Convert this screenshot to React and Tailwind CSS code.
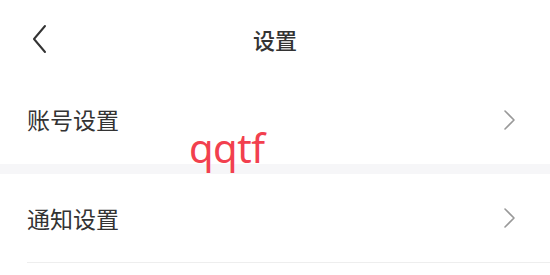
const font = { fontFamily: '"Noto Sans CJK SC", "Noto Sans", sans-serif' }

const Arrow = () => (
  <svg width="14" height="22" viewBox="0 0 14 22" className="mr-[33px]" fill="none">
    <path d="M2 2 L11 11 L2 20" stroke="#999999" strokeWidth="1.6" strokeLinecap="round" strokeLinejoin="round" />
  </svg>
)

export default function App() {
  return (
    <div className="relative w-[550px] h-[275px] bg-white overflow-hidden" style={font}>
      {/* Header */}
      <div className="h-[77px] flex items-center relative">
        <svg width="16" height="30" viewBox="0 0 16 30" className="ml-[31px]" fill="none">
          <path d="M14 2 L3 15 L14 28" stroke="#333333" strokeWidth="2" strokeLinecap="round" strokeLinejoin="round" />
        </svg>
        <h1 className="absolute left-0 right-0 text-center text-[22px] font-medium text-[#333333] leading-none pointer-events-none">
          设置
        </h1>
      </div>

      <div className="h-[87px] flex items-center pl-[27px] pb-[2px]">
        <span className="flex-1 text-[23px] text-[#333333] leading-none">账号设置</span>
        <Arrow />
      </div>

      <div className="h-[10px] bg-[#f6f6f8]" />

      <div className="h-[89px] flex items-center border-b border-[#eeeeee] ml-[27px]">
        <span className="flex-1 text-[23px] text-[#333333] leading-none">通知设置</span>
        <Arrow />
      </div>

      {/* watermark */}
      <div className="absolute left-[189px] top-[128px] text-[40px] leading-none text-[#f2404e] tracking-[-0.5px]" style={{ fontFamily: '"Noto Sans", sans-serif' }}>
        qqtf
      </div>
    </div>
  )
}
